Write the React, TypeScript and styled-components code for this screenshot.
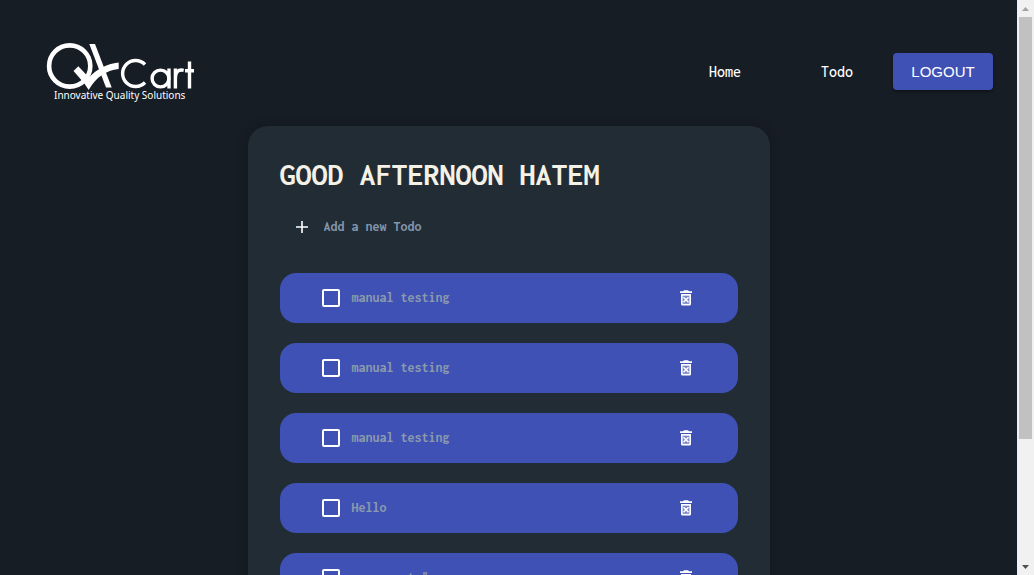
import React, { useState } from "react";
import styled, { createGlobalStyle } from "styled-components";

const mono = `"Inconsolata", "Noto Sans Mono CJK SC", "Noto Sans Mono CJK JP", "Liberation Mono", monospace`;

const GlobalStyle = createGlobalStyle`
  * { box-sizing: border-box; }
  body { margin: 0; background: #171d25; color: #fff; font-family: ${mono}; }
`;

const Frame = styled.div`
  display: flex;
  height: 100vh;
`;

const Page = styled.div`
  flex: 1;
  min-width: 0;
  overflow: hidden;
`;

const Header = styled.header`
  display: flex;
  align-items: center;
  justify-content: space-between;
  height: 126px;
  padding: 17px 24px 0 40px;
`;

const Logo = styled.svg`
  display: block;
  width: 160px;
  height: 71px;
`;

const Nav = styled.nav`
  display: flex;
  align-items: center;
`;

const NavLink = styled.a`
  margin-right: 80px;
  color: #fff;
  font-size: 16px;
  font-weight: 500;
  line-height: 24px;
  text-decoration: none;

  &:last-of-type { margin-right: 40px; }
`;

const LogoutButton = styled.button`
  width: 100px;
  height: 37px;
  padding: 0;
  border: 0;
  border-radius: 4px;
  background: #3f51b5;
  color: #fff;
  font: 15px/24px "Liberation Sans", Arial, sans-serif;
  box-shadow: 0 2px 3px rgba(0, 0, 0, 0.35);
`;

const Card = styled.main`
  width: 522px;
  max-width: 100%;
  margin: 0 auto;
  padding: 32px;
  border-radius: 20px;
  background: #222c35;
  box-shadow: 0 0 12px rgba(0, 0, 0, 0.2);
`;

const Title = styled.h1`
  margin: 0;
  color: #f4f1e6;
  font-size: 32px;
  font-weight: 700;
  line-height: 34px;
  white-space: nowrap;
`;

const AddForm = styled.form`
  display: flex;
  align-items: center;
  height: 48px;
  margin: 11px 0 22px;
  padding-left: 10px;
`;

const IconButton = styled.button`
  display: flex;
  padding: 0;
  border: 0;
  background: none;
  color: #fff;
`;

const AddIcon = styled.svg`
  display: block;
  width: 24px;
  height: 24px;
  padding: 4px;
`;

const AddInput = styled.input`
  flex: 1;
  margin-left: 10px;
  padding: 0;
  border: 0;
  outline: 0;
  background: none;
  color: #8496ae;
  font: 700 14px/20px ${mono};

  &::placeholder { color: #8496ae; opacity: 1; }
`;

const List = styled.ul`
  display: grid;
  gap: 20px;
  margin: 0;
  padding: 0;
  list-style: none;
`;

const Row = styled.li`
  display: flex;
  align-items: center;
  justify-content: space-between;
  height: 50px;
  padding: 0 43px 0 42px;
  border-radius: 16px;
  background: #3f51b5;
`;

const Label = styled.label`
  display: flex;
  align-items: center;
  gap: 12px;
  color: #8b9bac;
  font-size: 14px;
  font-weight: 700;
  line-height: 20px;
`;

const Checkbox = styled.input`
  appearance: none;
  width: 18px;
  height: 18px;
  margin: 0;
  border: 2px solid #fff;
  border-radius: 2px;

  &:checked { background: #fff; }
`;

const TrashIcon = styled.svg`
  display: block;
  width: 18px;
  height: 18px;
`;

const Scrollbar = styled.div`
  display: flex;
  flex-direction: column;
  align-items: center;
  width: 17px;
  background: #f1f1f1;
`;

const Arrow = styled.svg`
  flex: none;
  width: 17px;
  height: 17px;
`;

const Track = styled.div`
  flex: 1;
  width: 13px;
`;

const Thumb = styled.div`
  height: 78%;
  background: #c1c1c1;
`;

const todos = ["manual testing", "manual testing", "manual testing", "Hello", 'summer etc"'];

export default function App() {
  const [text, setText] = useState("");
  return (
    <>
      <GlobalStyle />
      <Frame>
        <Page>
          <Header>
            <Logo viewBox="0 0 160 71" role="img" aria-label="QA Cart">
              <g fill="none" stroke="#fff" strokeWidth="3.4">
                <circle cx="29.7" cy="30" r="20.6" strokeWidth="4.6" />
                <path d="M105 28.500 A13 13 0 1 0 105 46.500" />
                <circle cx="120.500" cy="42.500" r="8.400" />
                <path d="M129 32.500V52.500M135.400 32.500V52.500M135.400 43C135.400 36 138 33 143.700 34.300M149.500 25.500V52.500M145 34.800H154" />
              </g>
              <path fill="#fff" d="M49.300 8H55L71.700 51.500H66Z" />
              <path fill="#fff" d="M33.500 35L38.300 30.300L49 41.500C57 33 66 28 78.700 26.500V33C66 34.500 56 41 48.700 54L44 47Z" />
              <text x="14" y="63" fill="#fff" fontSize="10" fontFamily="Noto Sans, sans-serif">Innovative Quality Solutions</text>
            </Logo>
            <Nav>
              <NavLink href="#home">Home</NavLink>
              <NavLink href="#todo">Todo</NavLink>
              <LogoutButton type="button">LOGOUT</LogoutButton>
            </Nav>
          </Header>
          <Card>
            <Title>GOOD AFTERNOON HATEM</Title>
            <AddForm onSubmit={(e) => e.preventDefault()}>
              <IconButton type="submit" aria-label="Add todo">
                <AddIcon viewBox="0 0 16 16" fill="none" stroke="currentColor" strokeWidth="1.6">
                  <path d="M8 2V14M2 8H14" />
                </AddIcon>
              </IconButton>
              <AddInput aria-label="Add a new Todo" placeholder="Add a new Todo" value={text} onChange={(e) => setText(e.target.value)} />
            </AddForm>
            <List>
              {todos.map((todo, i) => (
                <Row key={i}>
                  <Label>
                    <Checkbox type="checkbox" />
                    {todo}
                  </Label>
                  <IconButton type="button" aria-label={`Delete ${todo}`}>
                    <TrashIcon viewBox="0 0 18 18">
                      <path fill="currentColor" fillRule="evenodd" d="M3 2.300H6L7 1.300H11L12 2.300H15V4H3ZM4 5H14V15Q14 16.500 12.500 16.500H5.500Q4 16.500 4 15ZM5.700 6.700V14.800H12.300V6.700Z" />
                      <path fill="currentColor" fillOpacity="0.3" d="M5.700 6.700H12.300V14.800H5.700Z" />
                      <path stroke="currentColor" strokeWidth="1.600" d="M6.500 8.200L11.500 13.200M11.500 8.200L6.500 13.200" />
                    </TrashIcon>
                  </IconButton>
                </Row>
              ))}
            </List>
          </Card>
        </Page>
        <Scrollbar aria-hidden="true">
          <Arrow viewBox="0 0 17 17"><path fill="#a3a3a3" d="M8.500 7L12 11H5Z" /></Arrow>
          <Track><Thumb /></Track>
          <Arrow viewBox="0 0 17 17"><path fill="#505050" d="M5 7H12L8.500 11Z" /></Arrow>
        </Scrollbar>
      </Frame>
    </>
  );
}
